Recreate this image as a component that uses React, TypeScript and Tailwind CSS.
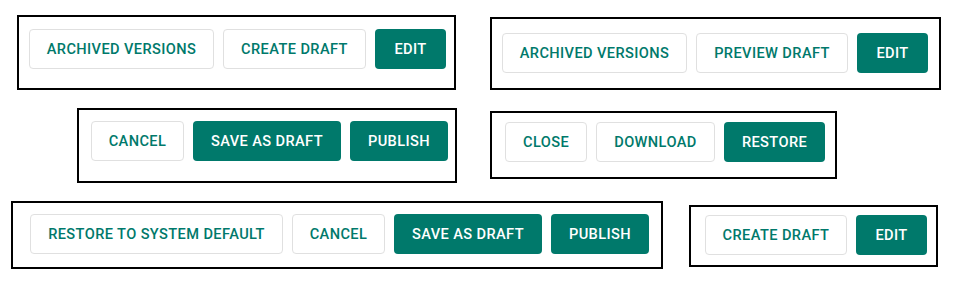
type Btn = { label: string; width: string; primary?: boolean };

type Group = {
  box: string;
  buttons: Btn[];
};

const ROWS: Group[][] = [
  [
    {
      box: "ml-[17px] mt-[15px] h-[75px] w-[439px] pl-[10px] pt-[12px]",
      buttons: [
        { label: "Archived Versions", width: "w-[185px]" },
        { label: "Create Draft", width: "w-[143px]" },
        { label: "Edit", width: "w-[71px]", primary: true },
      ],
    },
    {
      box: "ml-[34px] mt-[17px] h-[73px] w-[451px] pl-[10px] pt-[14px]",
      buttons: [
        { label: "Archived Versions", width: "w-[185px]" },
        { label: "Preview Draft", width: "w-[152px]" },
        { label: "Edit", width: "w-[71px]", primary: true },
      ],
    },
  ],
  [
    {
      box: "ml-[77px] mt-[18px] h-[75px] w-[380px] pl-[12px] pt-[11px]",
      buttons: [
        { label: "Cancel", width: "w-[93px]" },
        { label: "Save as Draft", width: "w-[148px]", primary: true },
        { label: "Publish", width: "w-[98px]", primary: true },
      ],
    },
    {
      box: "ml-[33px] mt-[21px] h-[68px] w-[347px] pl-[13px] pt-[9px]",
      buttons: [
        { label: "Close", width: "w-[82px]" },
        { label: "Download", width: "w-[119px]" },
        { label: "Restore", width: "w-[101px]", primary: true },
      ],
    },
  ],
  [
    {
      box: "ml-[11px] mt-[18px] h-[68px] w-[652px] pl-[17px] pt-[11px]",
      buttons: [
        { label: "Restore to System Default", width: "w-[253px]" },
        { label: "Cancel", width: "w-[93px]" },
        { label: "Save as Draft", width: "w-[148px]", primary: true },
        { label: "Publish", width: "w-[98px]", primary: true },
      ],
    },
    {
      box: "ml-[26px] mt-[22px] h-[62px] w-[249px] pl-[14px] pt-[8px]",
      buttons: [
        { label: "Create Draft", width: "w-[142px]" },
        { label: "Edit", width: "w-[71px]", primary: true },
      ],
    },
  ],
];

function ActionButton({ label, width, primary }: Btn) {
  return (
    <button
      type="button"
      className={
        primary
          ? `${width} flex h-10 flex-none items-center justify-center rounded bg-[#00796b] pt-[2px] text-[14.6px] font-medium uppercase tracking-[0.4px] text-white`
          : `${width} flex h-10 flex-none items-center justify-center rounded border border-[#e0e0e0] bg-white pt-[2px] text-[14.6px] font-medium uppercase tracking-[0.4px] text-[#00796b]`
      }
    >
      {label}
    </button>
  );
}

export default function App() {
  return (
    <div className="h-[298px] w-[963px] bg-white font-['Roboto',sans-serif]">
      {ROWS.map((row, i) => (
        <div key={i} className="flex items-start">
          {row.map((g, j) => (
            <div key={j} className={`${g.box} flex flex-none items-start gap-[9px] border-2 border-black`}>
              {g.buttons.map((b) => (
                <ActionButton key={b.label} {...b} />
              ))}
            </div>
          ))}
        </div>
      ))}
    </div>
  );
}
